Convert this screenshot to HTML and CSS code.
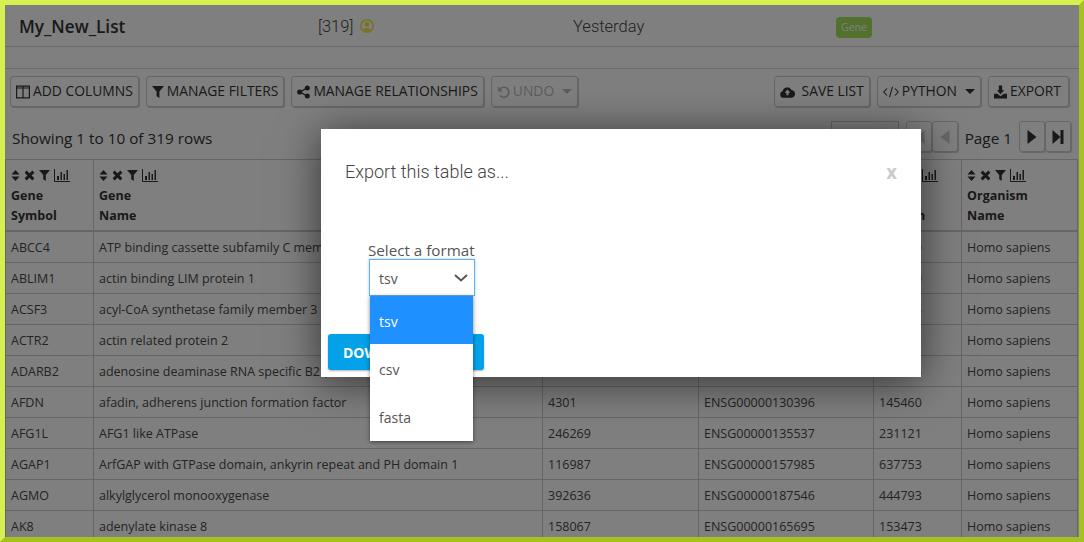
FILE: index.html
```html
<!DOCTYPE html>
<html lang="en">
<head>
    <meta charset="UTF-8">
    <title>My_New_List</title>
    <link rel="stylesheet" href="styles.css">
</head>
<body>
<svg class="icon-defs" aria-hidden="true">
    <symbol id="i-sort" viewBox="0 0 10 12"><path d="M5 0l4.500 5H.5zM5 12L.5 7h9z"/></symbol>
    <symbol id="i-times" viewBox="0 0 12 12"><path d="M1.800 1.800l8.400 8.400M10.200 1.800l-8.400 8.400" fill="none" stroke="currentColor" stroke-width="3.200"/></symbol>
    <symbol id="i-filter" viewBox="0 0 13 13"><path d="M0 0h13L8 6v7L5 11V6z"/></symbol>
    <symbol id="i-chart" viewBox="0 0 16 13"><path d="M.5 0v12.500H16" fill="none" stroke="currentColor"/><path d="M3 7h2v4H3zM6.500 3H8v8H6.500zM9.500 5H11v6H9.500zM12.500 1H14v10h-1.500z"/></symbol>
    <symbol id="i-columns" viewBox="0 0 14 13"><path d="M.6.6h12.800v11.800H.6zM7 .6v11.800M.6 2.500h12.800" fill="none" stroke="currentColor" stroke-width="1.200"/></symbol>
    <symbol id="i-share" viewBox="0 0 13 13"><path d="M10 2.500L3 6.500l7 4" fill="none" stroke="currentColor" stroke-width="1.400"/><circle cx="10.300" cy="2.500" r="2.500"/><circle cx="2.700" cy="6.500" r="2.600"/><circle cx="10.300" cy="10.500" r="2.500"/></symbol>
    <symbol id="i-undo" viewBox="0 0 14 14"><path d="M3.500 3.500A5.400 5.400 0 1 1 3 10.500" fill="none" stroke="currentColor" stroke-width="1.800"/><path d="M1 1v5.500h5.500z"/></symbol>
    <symbol id="i-cloud" viewBox="0 0 18 14"><path d="M4 14a4 4 0 0 1-1-7.800A5.800 5.800 0 0 1 13.800 4.500 4.800 4.800 0 0 1 14 14z"/><path class="icon-cut" d="M9 4l3.500 3.800H10.300V11H7.700V7.800H5.500z"/></symbol>
    <symbol id="i-code" viewBox="0 0 16 12"><path d="M4 2.500L.8 6 4 9.500M12 2.500L15.200 6 12 9.500M9.500.8L6.500 11.200" fill="none" stroke="currentColor" stroke-width="1.100"/></symbol>
    <symbol id="i-download" viewBox="0 0 14 14"><path d="M5.200 0h3.600v5H11L7 9.500 3 5h2.200zM0 9h3.500L7 11.500 10.500 9H14v5H0z"/></symbol>
    <symbol id="i-caret" viewBox="0 0 10 5"><path d="M0 0h10L5 5z"/></symbol>
    <symbol id="i-play" viewBox="0 0 9 14"><path d="M0 0l9 7-9 7z"/></symbol>
    <symbol id="i-last" viewBox="0 0 11 14"><path d="M0 0l8 7-8 7zM8 0h3v14H8z"/></symbol>
    <symbol id="i-first" viewBox="0 0 11 14"><path d="M11 0L3 7l8 7zM3 0H0v14h3z"/></symbol>
    <symbol id="i-back" viewBox="0 0 9 14"><path d="M9 0L0 7l9 7z"/></symbol>
    <symbol id="i-user" viewBox="0 0 14 14"><circle cx="7" cy="7" r="6.200" fill="none" stroke="currentColor" stroke-width="1.600"/><circle cx="7" cy="5.400" r="2.300"/><path d="M3.300 11.200c.6-1.800 2-2.300 3.700-2.300s3.100.5 3.700 2.300L7 12.800z"/></symbol>
</svg>

<div class="frame">
    <div class="list-head">
        <div class="list-name">My_New_List</div>
        <div class="list-count">[319] <svg class="icon icon-user"><use href="#i-user"/></svg></div>
        <div class="list-date">Yesterday</div>
        <div><span class="badge">Gene</span></div>
    </div>
    <div class="spacer-bar"></div>

    <div class="toolbar">
        <button class="btn"><svg class="icon"><use href="#i-columns"/></svg>Add Columns</button>
        <button class="btn"><svg class="icon icon-12"><use href="#i-filter"/></svg>Manage Filters</button>
        <button class="btn"><svg class="icon icon-13"><use href="#i-share"/></svg>Manage Relationships</button>
        <button class="btn btn-off"><svg class="icon icon-13"><use href="#i-undo"/></svg>Undo<svg class="icon caret"><use href="#i-caret"/></svg></button>
        <div class="toolbar-right">
            <button class="btn"><svg class="icon icon-cloud"><use href="#i-cloud"/></svg>Save List</button>
            <button class="btn"><svg class="icon icon-16"><use href="#i-code"/></svg>Python<svg class="icon caret"><use href="#i-caret"/></svg></button>
            <button class="btn btn-export"><svg class="icon icon-13"><use href="#i-download"/></svg>Export</button>
        </div>
    </div>

    <div class="pager">
        <div class="pager-info">Showing 1 to 10 of 319 rows</div>
        <div class="pager-nav">
            <div class="page-size"></div>
            <button class="page-btn page-off"><svg class="icon"><use href="#i-first"/></svg></button>
            <button class="page-btn page-off"><svg class="icon"><use href="#i-back"/></svg></button>
            <span class="page-label">Page 1</span>
            <button class="page-btn"><svg class="icon"><use href="#i-play"/></svg></button>
            <button class="page-btn"><svg class="icon"><use href="#i-last"/></svg></button>
        </div>
    </div>

    <table class="data-table">
        <colgroup>
            <col class="col-symbol"><col class="col-name"><col class="col-id"><col class="col-ens"><col class="col-mim"><col>
        </colgroup>
        <thead>
            <tr>
                <th><div class="th-tools"><svg class="t-sort"><use href="#i-sort"/></svg><svg class="t-times"><use href="#i-times"/></svg><svg class="t-filter"><use href="#i-filter"/></svg><svg class="t-chart"><use href="#i-chart"/></svg></div>Gene<br>Symbol</th>
                <th><div class="th-tools"><svg class="t-sort"><use href="#i-sort"/></svg><svg class="t-times"><use href="#i-times"/></svg><svg class="t-filter"><use href="#i-filter"/></svg><svg class="t-chart"><use href="#i-chart"/></svg></div>Gene<br>Name</th>
                <th><div class="th-tools"><svg class="t-sort"><use href="#i-sort"/></svg><svg class="t-times"><use href="#i-times"/></svg><svg class="t-filter"><use href="#i-filter"/></svg><svg class="t-chart"><use href="#i-chart"/></svg></div>NCBI<br>Gene ID</th>
                <th><div class="th-tools"><svg class="t-sort"><use href="#i-sort"/></svg><svg class="t-times"><use href="#i-times"/></svg><svg class="t-filter"><use href="#i-filter"/></svg><svg class="t-chart"><use href="#i-chart"/></svg></div>Ensembl<br>Gene ID</th>
                <th><div class="th-tools"><svg class="t-sort"><use href="#i-sort"/></svg><svg class="t-times"><use href="#i-times"/></svg><svg class="t-filter"><use href="#i-filter"/></svg><svg class="t-chart"><use href="#i-chart"/></svg></div>Gene<br>Protein</th>
                <th><div class="th-tools"><svg class="t-sort"><use href="#i-sort"/></svg><svg class="t-times"><use href="#i-times"/></svg><svg class="t-filter"><use href="#i-filter"/></svg><svg class="t-chart"><use href="#i-chart"/></svg></div>Organism<br>Name</th>
            </tr>
        </thead>
        <tbody>
            <tr><td>ABCC4</td><td>ATP binding cassette subfamily C member 4</td><td>10257</td><td>ENSG00000125257</td><td>605250</td><td>Homo sapiens</td></tr>
            <tr><td>ABLIM1</td><td>actin binding LIM protein 1</td><td>3983</td><td>ENSG00000099204</td><td>602330</td><td>Homo sapiens</td></tr>
            <tr><td>ACSF3</td><td>acyl-CoA synthetase family member 3</td><td>197322</td><td>ENSG00000176715</td><td>614245</td><td>Homo sapiens</td></tr>
            <tr><td>ACTR2</td><td>actin related protein 2</td><td>10097</td><td>ENSG00000138071</td><td>604221</td><td>Homo sapiens</td></tr>
            <tr><td>ADARB2</td><td>adenosine deaminase RNA specific B2 (inactive)</td><td>105</td><td>ENSG00000185736</td><td>602065</td><td>Homo sapiens</td></tr>
            <tr><td>AFDN</td><td>afadin, adherens junction formation factor</td><td>4301</td><td>ENSG00000130396</td><td>145460</td><td>Homo sapiens</td></tr>
            <tr><td>AFG1L</td><td>AFG1 like ATPase</td><td>246269</td><td>ENSG00000135537</td><td>231121</td><td>Homo sapiens</td></tr>
            <tr><td>AGAP1</td><td>ArfGAP with GTPase domain, ankyrin repeat and PH domain 1</td><td>116987</td><td>ENSG00000157985</td><td>637753</td><td>Homo sapiens</td></tr>
            <tr><td>AGMO</td><td>alkylglycerol monooxygenase</td><td>392636</td><td>ENSG00000187546</td><td>444793</td><td>Homo sapiens</td></tr>
            <tr><td>AK8</td><td>adenylate kinase 8</td><td>158067</td><td>ENSG00000165695</td><td>153473</td><td>Homo sapiens</td></tr>
        </tbody>
    </table>

    <div class="overlay">
        <div class="modal">
            <div class="modal-head">
                <h4 class="modal-title">Export this table as...</h4>
                <span class="modal-close">x</span>
            </div>
            <div class="format-group">
                <label class="format-label">Select a format</label>
                <div class="select-box">
                    <span class="select-value">tsv</span>
                    <svg class="chevron" viewBox="0 0 14 8"><path d="M1 1l6 5.500L13 1" fill="none" stroke="currentColor" stroke-width="2"/></svg>
                    <ul class="select-menu">
                        <li class="active">tsv</li>
                        <li>csv</li>
                        <li>fasta</li>
                    </ul>
                </div>
            </div>
            <button class="btn-download">Download</button>
        </div>
    </div>
</div>
</body>
</html>
```

FILE: styles.css
```css
html, body {
    margin: 0;
    padding: 0;
}
body {
    font-family: "Open Sans", sans-serif;
    color: #333;
    background: #fff;
}
.icon-defs {
    position: absolute;
    width: 0;
    height: 0;
}
.frame {
    position: relative;
    box-sizing: border-box;
    width: 1084px;
    height: 542px;
    overflow: hidden;
    border: 5px solid;
    border-color: #d6f052 #a6c122 #a6c122 #d6f052;
    background: #fff;
}
.icon {
    width: 14px;
    height: 14px;
    fill: currentColor;
    flex: none;
}
.icon-12 { width: 12px; }
.icon-13 { width: 13px; }
.icon-16 { width: 16px; }
.icon-cut {
    fill: #fff;
}

/* list header */
.list-head {
    display: grid;
    grid-template-columns: 299px 255px 263px auto;
    align-items: center;
    height: 40px;
    padding: 1px 0 0 14px;
    border-bottom: 1px solid #d4d4d4;
}
.list-name {
    font-size: 17.200px;
    font-weight: 600;
}
.list-count, .list-date {
    font-family: Roboto, sans-serif;
    font-weight: 300;
    font-size: 16.500px;
    color: #444;
}
.list-count {
    display: flex;
    align-items: center;
    gap: 7px;
}
.icon-user {
    color: #f5e63c;
}
.badge {
    display: inline-block;
    width: 36px;
    height: 21px;
    line-height: 21px;
    border-radius: 4px;
    text-align: center;
    font-size: 10.500px;
    color: #fff;
    background: #a4e25a;
}
.spacer-bar {
    height: 21px;
    border-bottom: 1px solid #d4d4d4;
}

/* buttons */
.toolbar {
    display: flex;
    gap: 7px;
    padding: 7px 10px 0 5px;
}
.toolbar-right {
    display: flex;
    gap: 7px;
    margin-left: auto;
}
.btn, .page-btn {
    display: flex;
    align-items: center;
    height: 31px;
    border: 1px solid #ccc;
    border-radius: 3px;
    background: #fff;
    color: #333;
    font-family: "Open Sans", sans-serif;
    box-shadow: 1px 1px 1px rgba(0, 0, 0, 0.2);
}
.btn {
    gap: 3px;
    padding: 0 5px 2px;
    font-size: 13.860px;
    text-transform: uppercase;
}
.btn .icon {
    margin-top: 2px;
}
.btn-export {
    padding-right: 7px;
}
.btn-off {
    color: #bbb;
}
.page-off {
    color: #ccc;
}
.caret {
    width: 10px;
    height: 5px;
    margin-left: 5px;
}
.icon-cloud {
    width: 15px;
    margin-right: 4px;
}

/* pager */
.pager {
    display: flex;
    align-items: center;
    justify-content: space-between;
    height: 31px;
    margin: 14px 0 7px;
    padding: 0 8px 0 7px;
}
.pager-info, .page-label {
    font-size: 15.300px;
    padding-top: 3px;
}
.pager-nav {
    display: flex;
    align-items: center;
}
.page-size {
    width: 66px;
    height: 29px;
    margin-right: 7px;
    border: 1px solid #ccc;
}
.page-btn {
    justify-content: center;
    width: 26px;
    padding: 0;
}
.page-label {
    margin: 0 7px;
}

/* table */
.data-table {
    width: 1073px;
    table-layout: fixed;
    border-collapse: collapse;
    font-size: 12.500px;
}
.col-symbol { width: 88px; }
.col-name { width: 449px; }
.col-id { width: 156px; }
.col-ens { width: 175px; }
.col-mim { width: 88px; }
.data-table th, .data-table td {
    border: 1px solid #ccc;
    padding: 0 5px;
    text-align: left;
    white-space: nowrap;
    overflow: hidden;
}
.data-table th {
    height: 70px;
    line-height: 20px;
    border-bottom-width: 2px;
    font-weight: 700;
    vertical-align: top;
}
.data-table td {
    height: 30px;
    color: #484848;
}
.th-tools {
    display: flex;
    align-items: center;
    gap: 4px;
    height: 15px;
    margin: 8px 0 3px;
}
.th-tools svg {
    fill: currentColor;
}
.t-sort { width: 9px; height: 11px; }
.t-times { width: 11px; height: 11px; }
.t-filter { width: 11px; height: 11px; }
.t-chart { width: 16px; height: 13px; }

/* export dialog */
.overlay {
    position: absolute;
    inset: 0;
    padding: 124px 0 0 316px;
    background: rgba(0, 0, 0, 0.5);
}
.modal {
    display: flex;
    flex-direction: column;
    width: 600px;
    height: 248px;
    background: #fff;
    box-shadow: 0 5px 40px rgba(0, 0, 0, 0.6);
}
.modal-head {
    display: flex;
    justify-content: space-between;
    align-items: center;
    padding: 32px 24px 0;
}
.modal-title {
    margin: 0;
    font-family: Roboto, sans-serif;
    font-weight: 300;
    font-size: 18px;
    line-height: 22px;
    color: #444;
}
.modal-close {
    font-family: Roboto, sans-serif;
    font-weight: 700;
    font-size: 21px;
    line-height: 22px;
    color: #ccc;
}
.format-group {
    margin: 57px 0 0 47px;
}
.format-label {
    display: block;
    height: 19px;
    font-size: 15.200px;
    line-height: 20px;
    color: #555;
}
.select-box {
    position: relative;
    display: flex;
    align-items: center;
    justify-content: space-between;
    box-sizing: border-box;
    width: 106px;
    height: 37px;
    margin-left: 1px;
    padding: 0 6px 0 9px;
    border: 1px solid #66afe9;
    box-shadow: 0 0 3px rgba(102, 175, 233, 0.6);
    font-size: 14px;
    color: #555;
}
.select-value {
    padding-top: 2px;
}
.chevron {
    width: 14px;
    height: 8px;
}
.select-menu {
    position: absolute;
    top: 36px;
    left: 0;
    width: 103px;
    margin: 0;
    padding: 0 0 1px;
    list-style: none;
    background: #fff;
    box-shadow: 0 1px 4px rgba(0, 0, 0, 0.5);
    z-index: 2;
}
.select-menu li {
    height: 48px;
    line-height: 51px;
    padding-left: 9px;
}
.select-menu .active {
    background: #1e90ff;
    color: #fff;
}
.btn-download {
    width: 156px;
    height: 36px;
    margin: 38px 0 0 7px;
    padding: 0 0 0 15px;
    border: 0;
    border-radius: 3px;
    background: #03a1e8;
    color: #fff;
    font-family: "Open Sans", sans-serif;
    font-size: 14px;
    font-weight: 700;
    text-align: left;
    text-transform: uppercase;
    box-shadow: 0 1px 2px rgba(0, 0, 0, 0.3);
}
```
